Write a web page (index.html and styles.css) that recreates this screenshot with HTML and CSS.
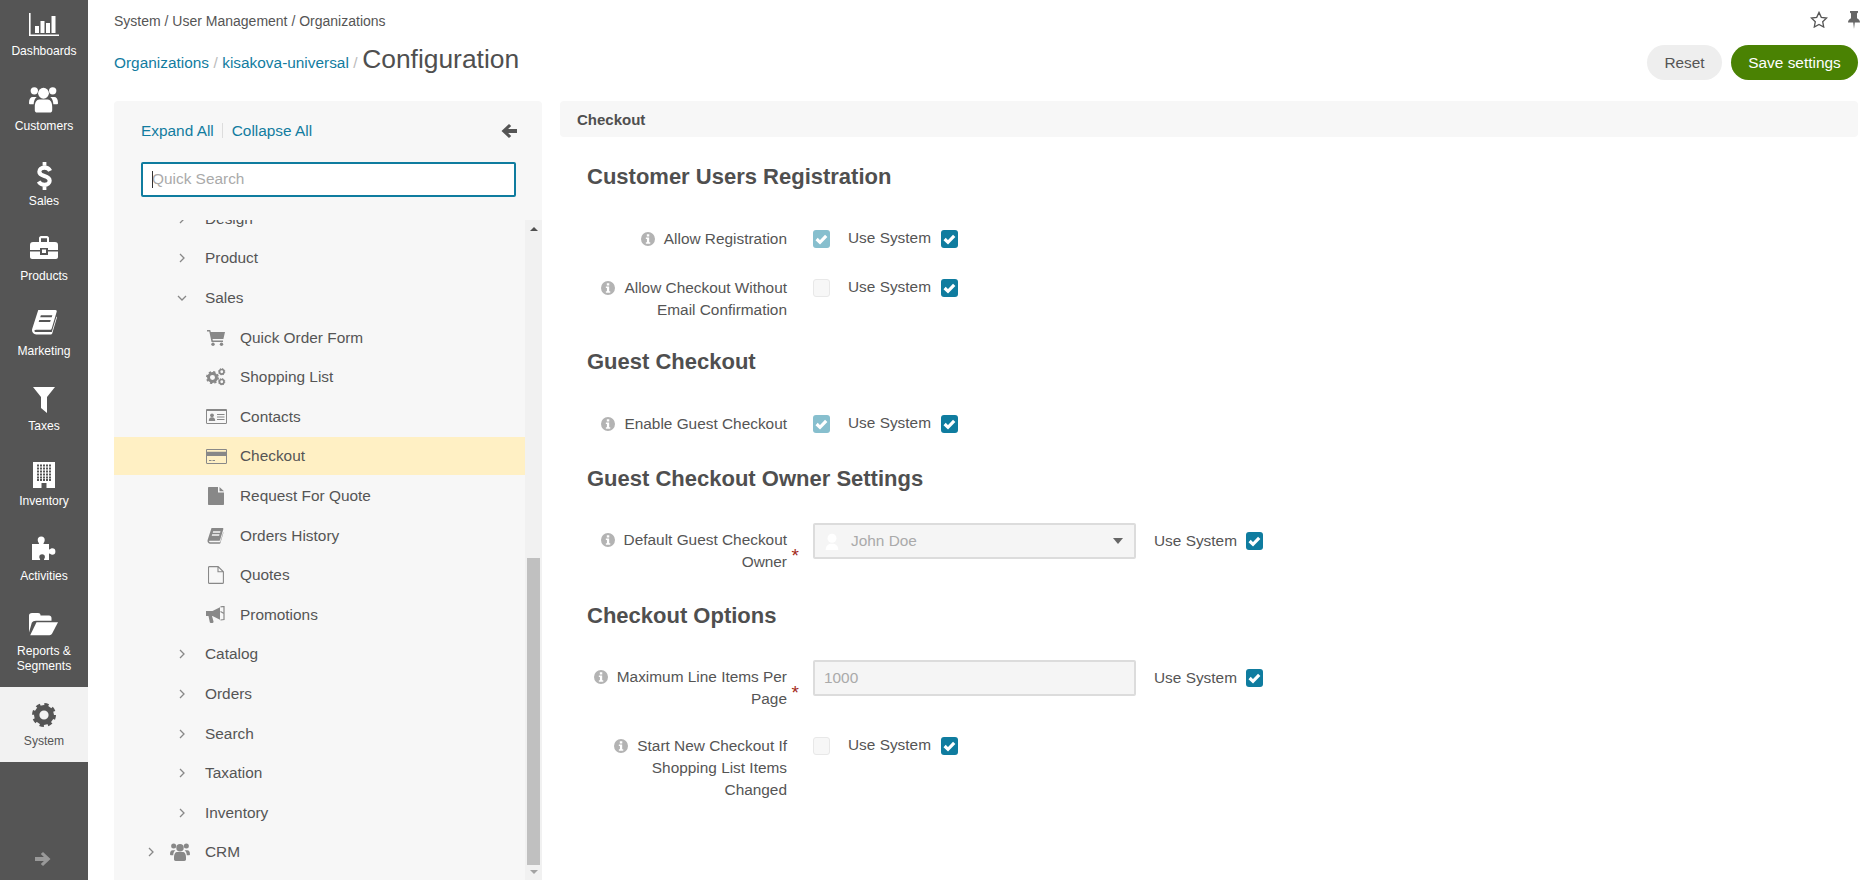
FILE: index.html
```html
<!DOCTYPE html>
<html lang="en">
<head>
<meta charset="utf-8">
<title>Configuration</title>
<link rel="stylesheet" href="styles.css">
</head>
<body>
<svg class="defs" width="0" height="0" aria-hidden="true">
  <symbol id="i-chart" viewBox="0 0 30 23"><path d="M0 0h1.600v21.400H30V23H0z"/><path d="M6 13h4v7H6zM11.500 8h4v12h-4zM17 10h4v10h-4zM22.500 3h4v17h-4z"/></symbol>
  <symbol id="i-users" viewBox="0 0 30 27"><circle cx="5.500" cy="4.500" r="3.800"/><circle cx="24.500" cy="4.500" r="3.800"/><circle cx="15" cy="7" r="5.600"/><path d="M0 17c0-4 1.500-6 4-6h4c-2 1.500-3 4-3.200 7.500H1.500C.5 18.500 0 18 0 17zM30 17c0-4-1.500-6-4-6h-4c2 1.500 3 4 3.200 7.500h3.300c1 0 1.500-.5 1.500-1.500zM8.500 27C7 27 6 26 6 24.500V21c0-4.500 2-7.500 4.500-7.500h9C22 13.500 24 16.500 24 21v3.500c0 1.500-1 2.500-2.500 2.500z"/></symbol>
  <symbol id="i-dollar" viewBox="0 0 16 30"><path d="M6 0h4v4H6zM6 26h4v4H6z"/><path d="M14 9.500C13 7.500 10.500 6 8 6 4.500 6 2.500 8 2.500 10.500c0 6 11 3 11 9.500 0 2.500-2.300 4.300-5.500 4.300-2.700 0-5-1.300-6.300-3.500" fill="none" stroke="currentColor" stroke-width="4.400"/></symbol>
  <symbol id="i-case" viewBox="0 0 28 23"><path fill-rule="evenodd" d="M0 9c0-2 1-3 3-3h6V2c0-1 1-2 2-2h6c1 0 2 1 2 2v4h6c2 0 3 1 3 3v5H18v-2h-8v2H0zM11 2.300V6h6V2.300z"/><path d="M0 15.500h10V19h8v-3.500h10V21c0 1-1 2-2 2H2c-1 0-2-1-2-2zM12 13.500h4V17h-4z"/></symbol>
  <symbol id="i-book" viewBox="0 0 24 24"><path fill-rule="evenodd" d="M6 0h16.500c1 0 1.500.7 1.200 1.700L19 17.500c-.3 1-.8 1.500-2 1.500H4c-1.500 0-2 .8-1.500 1.600.3.4.8.6 1.500.6h15l4.500-15 .5.700-4.600 15.600c-.2.600-.7 1-1.400 1H4c-2.500 0-4-2-4-4 0-.6.100-1.300.3-1.800zM8.500 5l-.6 2h11l.6-2zM7 9.500l-.6 2h11l.6-2z"/></symbol>
  <symbol id="i-filter" viewBox="0 0 22 26"><path d="M0 0h22L14 10v16l-6-5V10z"/></symbol>
  <symbol id="i-building" viewBox="0 0 22 26"><path d="M0 0h22v26H0z"/><path class="holes" d="M4 3.500h14M4 6.500h14M4 9.500h14M4 12.500h14M4 15.500h14M4 18h14"/><path class="door" d="M8.500 21h5v5h-5z"/></symbol>
  <symbol id="i-puzzle" viewBox="0 0 26 25"><path d="M1 8h6.500c.5 0 .7-.5.3-1C7 6 6.700 5 6.700 4a3.500 3.500 0 0 1 7 0c0 1-.3 2-1 3-.4.500-.2 1 .3 1H18v5c0 .5.500.7 1 .3 1-.7 1.500-1 2.200-1a3.200 3.200 0 0 1 0 6.400c-.7 0-1.300-.3-2.200-1-.5-.4-1-.2-1 .3V24h-4.500c-.5 0-.7-.5-.3-1 .6-1 .7-1.500.7-2a2.800 2.800 0 0 0-5.600 0c0 .5.100 1 .7 2 .3.500.100 1-.4 1H1z"/></symbol>
  <symbol id="i-folder" viewBox="0 0 29 27" preserveAspectRatio="none"><path d="M0 23V3c0-1.500 1-3 3-3h6c1.500 0 2.500 1 2.500 2.500V3H20c1.500 0 2.500 1 2.500 3v3H7c-2 0-3.500 1-4.200 2.500z"/><path d="M7.500 11H29l-6 13.500c-.5 1-1.500 1.500-2.500 1.500H1.200z"/></symbol>
  <symbol id="i-gear" viewBox="0 0 24 24"><circle cx="12" cy="12" r="7.300" fill="none" stroke="currentColor" stroke-width="5.400"/><circle cx="12" cy="12" r="10.400" fill="none" stroke="currentColor" stroke-width="3.200" stroke-dasharray="4.200 3.970"/></symbol>
  <symbol id="i-gears" viewBox="0 0 20 18"><use href="#i-gear" x="0" y="3" width="13" height="13"/><use href="#i-gear" x="12" y="0" width="7.500" height="7.500"/><use href="#i-gear" x="12" y="10" width="7.500" height="7.500"/></symbol>
  <symbol id="i-arrow" viewBox="0 0 16 14"><path d="M8 0l7.500 7L8 14l-2.200-2.100 3.100-3H0V5.100h8.900l-3.100-3z"/></symbol>
  <symbol id="i-cart" viewBox="0 0 18 16"><path d="M0 0h3.200l.6 2H18l-1.600 7H5.500l.4 1.500H16V12H4.500L2.300 1.500H0z"/><circle cx="6" cy="14.300" r="1.700"/><circle cx="14.500" cy="14.300" r="1.700"/></symbol>
  <symbol id="i-card" viewBox="0 0 21 15"><path fill-rule="evenodd" d="M1.200 0h18.600c.7 0 1.200.5 1.200 1.200v12.600c0 .7-.5 1.200-1.200 1.200H1.200C.5 15 0 14.500 0 13.800V1.200C0 .5.500 0 1.200 0zM1 1v1.700h19V1zM1 7v7h19V7z"/><path d="M3 11h2.500v1H3zM6.500 11H9v1H6.500z"/></symbol>
  <symbol id="i-idcard" viewBox="0 0 21 15"><path fill-rule="evenodd" d="M1.200 0h18.600c.7 0 1.200.5 1.200 1.200v12.600c0 .7-.5 1.200-1.200 1.200H1.200C.5 15 0 14.500 0 13.800V1.200C0 .5.500 0 1.200 0zM1 2v12h19V2z"/><circle cx="6" cy="6.300" r="1.900"/><path d="M2.800 12c0-2.500 1-3.700 3.200-3.700S9.200 9.500 9.200 12zM11 5h7.500v1.100H11zM11 7.500h7.500v1.100H11zM11 10h7.500v1.100H11z"/></symbol>
  <symbol id="i-file" viewBox="0 0 16 18"><path d="M1 0h9v5.500h6V17c0 .6-.4 1-1 1H1c-.6 0-1-.4-1-1V1c0-.6.400-1 1-1z"/><path d="M11.500 0L16 4.300h-4.500z"/></symbol>
  <symbol id="i-fileo" viewBox="0 0 16 18"><path fill="none" stroke="currentColor" stroke-width="1.100" d="M1.500.6h8.600l5.300 5.200V16.400c0 .6-.4 1-1 1H1.500c-.6 0-1-.4-1-1V1.600c0-.6.400-1 1-1zM10 .6v5.200h5.400"/></symbol>
  <symbol id="i-horn" viewBox="0 0 19 17"><path d="M0 5h6.500L14 1.200v12.600L6.500 10H6l1.500 5.500c.2.700-.3 1.500-1 1.500H4.800c-.5 0-.9-.3-1-.8L2.500 10H0z"/><path fill="none" stroke="currentColor" stroke-width="1.200" d="M14.500.8L18 .5v13l-3.500.5M14.500 5.500l3.500 2"/></symbol>
  <symbol id="i-star" viewBox="0 0 18 17"><path fill="none" stroke="currentColor" stroke-width="1.300" d="M9 1.400l2.300 4.900 5.300.7-3.900 3.700 1 5.300L9 13.400 4.300 16l1-5.300L1.400 7l5.300-.7z"/></symbol>
  <symbol id="i-pin" viewBox="0 0 12 18"><path d="M2 0h8v1.500L9 2.500v4.800c1.700.9 3 2.200 3 4.200H6.800L6 18l-.8-6.500H0c0-2 1.300-3.300 3-4.200V2.500L2 1.500z"/></symbol>
  <symbol id="i-info" viewBox="0 0 13 13"><path fill-rule="evenodd" d="M6.500 0a6.500 6.500 0 1 1 0 13 6.500 6.500 0 0 1 0-13zM5.400 2.100v2h2.300v-2zM4.500 5.200v1.200h1v3.200h-1v1.200h4.100V9.600h-1V5.200z"/></symbol>
  <symbol id="i-check" viewBox="0 0 17 17"><path fill="none" stroke="currentColor" stroke-width="3.200" d="M3.600 8.500l3.400 3.300 6.200-6.400"/></symbol>
</svg>

<nav class="nav">
  <ul class="nav-list">
    <li class="nav-item"><svg class="ni ni-chart"><use href="#i-chart"/></svg><span>Dashboards</span></li>
    <li class="nav-item"><svg class="ni ni-users"><use href="#i-users"/></svg><span>Customers</span></li>
    <li class="nav-item"><svg class="ni ni-dollar"><use href="#i-dollar"/></svg><span>Sales</span></li>
    <li class="nav-item"><svg class="ni ni-case"><use href="#i-case"/></svg><span>Products</span></li>
    <li class="nav-item"><svg class="ni ni-book"><use href="#i-book"/></svg><span>Marketing</span></li>
    <li class="nav-item"><svg class="ni ni-filter"><use href="#i-filter"/></svg><span>Taxes</span></li>
    <li class="nav-item"><svg class="ni ni-building"><use href="#i-building"/></svg><span>Inventory</span></li>
    <li class="nav-item"><svg class="ni ni-puzzle"><use href="#i-puzzle"/></svg><span>Activities</span></li>
    <li class="nav-item nav-tall"><svg class="ni ni-folder"><use href="#i-folder"/></svg><span>Reports &amp; Segments</span></li>
    <li class="nav-item nav-active"><svg class="ni ni-gear"><use href="#i-gear"/></svg><span>System</span></li>
  </ul>
  <svg class="nav-toggle"><use href="#i-arrow"/></svg>
</nav>

<div class="main">
  <header class="head">
    <div class="head-top">
      <div class="crumbs">System / User Management / Organizations</div>
      <div class="head-icons">
        <svg class="ic-star"><use href="#i-star"/></svg>
        <svg class="ic-pin"><use href="#i-pin"/></svg>
      </div>
    </div>
    <div class="head-title">
      <div class="title-line">
        <a class="link">Organizations</a><span class="sep">/</span><a class="link">kisakova-universal</a><span class="sep">/</span><h1 class="title">Configuration</h1>
      </div>
      <div class="actions">
        <button class="btn btn-reset">Reset</button>
        <button class="btn btn-save">Save settings</button>
      </div>
    </div>
  </header>

  <div class="panels">
    <aside class="side">
      <div class="side-tools">
        <a class="link">Expand All</a><span class="divider"></span><a class="link">Collapse All</a>
        <svg class="collapse-arrow"><use href="#i-arrow"/></svg>
      </div>
      <div class="search">
        <input class="search-input" type="text" placeholder="Quick Search">
        <span class="caret"></span>
      </div>
      <div class="tree-wrap">
        <div class="tree-clip">
          <ul class="tree">
            <li class="row lv1"><svg class="chev"><polyline points="2,1 6,5 2,9"/></svg><span>Design</span></li>
            <li class="row lv1"><svg class="chev"><polyline points="2,1 6,5 2,9"/></svg><span>Product</span></li>
            <li class="row lv1"><svg class="chev chev-down"><polyline points="2,1 6,5 2,9"/></svg><span>Sales</span></li>
            <li class="row lv2"><span class="ticon"><svg class="ti-cart"><use href="#i-cart"/></svg></span><span>Quick Order Form</span></li>
            <li class="row lv2"><span class="ticon"><svg class="ti-gears"><use href="#i-gears"/></svg></span><span>Shopping List</span></li>
            <li class="row lv2"><span class="ticon"><svg class="ti-card"><use href="#i-idcard"/></svg></span><span>Contacts</span></li>
            <li class="row lv2 row-active"><span class="ticon"><svg class="ti-card"><use href="#i-card"/></svg></span><span>Checkout</span></li>
            <li class="row lv2"><span class="ticon"><svg class="ti-file"><use href="#i-file"/></svg></span><span>Request For Quote</span></li>
            <li class="row lv2"><span class="ticon"><svg class="ti-book"><use href="#i-book"/></svg></span><span>Orders History</span></li>
            <li class="row lv2"><span class="ticon"><svg class="ti-file"><use href="#i-fileo"/></svg></span><span>Quotes</span></li>
            <li class="row lv2"><span class="ticon"><svg class="ti-horn"><use href="#i-horn"/></svg></span><span>Promotions</span></li>
            <li class="row lv1"><svg class="chev"><polyline points="2,1 6,5 2,9"/></svg><span>Catalog</span></li>
            <li class="row lv1"><svg class="chev"><polyline points="2,1 6,5 2,9"/></svg><span>Orders</span></li>
            <li class="row lv1"><svg class="chev"><polyline points="2,1 6,5 2,9"/></svg><span>Search</span></li>
            <li class="row lv1"><svg class="chev"><polyline points="2,1 6,5 2,9"/></svg><span>Taxation</span></li>
            <li class="row lv1"><svg class="chev"><polyline points="2,1 6,5 2,9"/></svg><span>Inventory</span></li>
            <li class="row lv0"><svg class="chev"><polyline points="2,1 6,5 2,9"/></svg><svg class="ti-users"><use href="#i-users"/></svg><span>CRM</span></li>
          </ul>
        </div>
        <div class="scrollbar">
          <span class="sb-up"></span>
          <span class="sb-thumb"></span>
          <span class="sb-down"></span>
        </div>
      </div>
    </aside>

    <section class="content">
      <div class="content-bar">Checkout</div>
      <div class="form">
        <h2 class="fs-title">Customer Users Registration</h2>
        <div class="f-row r-first">
          <label class="f-label"><svg class="info"><use href="#i-info"/></svg>Allow Registration</label>
          <span class="cb cb-dim"><svg><use href="#i-check"/></svg></span>
          <span class="use">Use System</span><span class="cb cb-on"><svg><use href="#i-check"/></svg></span>
        </div>
        <div class="f-row r-next">
          <label class="f-label"><svg class="info"><use href="#i-info"/></svg>Allow Checkout Without Email Confirmation</label>
          <span class="cb cb-off"></span>
          <span class="use">Use System</span><span class="cb cb-on"><svg><use href="#i-check"/></svg></span>
        </div>

        <h2 class="fs-title t-guest">Guest Checkout</h2>
        <div class="f-row r-first">
          <label class="f-label"><svg class="info"><use href="#i-info"/></svg>Enable Guest Checkout</label>
          <span class="cb cb-dim"><svg><use href="#i-check"/></svg></span>
          <span class="use">Use System</span><span class="cb cb-on"><svg><use href="#i-check"/></svg></span>
        </div>

        <h2 class="fs-title t-owner">Guest Checkout Owner Settings</h2>
        <div class="f-row r-field">
          <label class="f-label f-req"><svg class="info"><use href="#i-info"/></svg>Default Guest Checkout Owner<span class="star">*</span></label>
          <div class="control control-select">
            <svg class="avatar" viewBox="0 0 16 20"><circle cx="8" cy="7" r="5"/><path d="M1 20c0-5 3-7 7-7s7 2 7 7z"/></svg>
            <span class="control-val">John Doe</span>
            <span class="select-caret"></span>
          </div>
          <span class="use use-wide">Use System</span><span class="cb cb-on"><svg><use href="#i-check"/></svg></span>
        </div>

        <h2 class="fs-title t-options">Checkout Options</h2>
        <div class="f-row r-field">
          <label class="f-label f-req"><svg class="info"><use href="#i-info"/></svg>Maximum Line Items Per Page<span class="star">*</span></label>
          <div class="control"><span class="control-num">1000</span></div>
          <span class="use use-wide">Use System</span><span class="cb cb-on"><svg><use href="#i-check"/></svg></span>
        </div>
        <div class="f-row r-last">
          <label class="f-label"><svg class="info"><use href="#i-info"/></svg>Start New Checkout If Shopping List Items Changed</label>
          <span class="cb cb-off"></span>
          <span class="use">Use System</span><span class="cb cb-on"><svg><use href="#i-check"/></svg></span>
        </div>
      </div>
    </section>
  </div>
</div>
</body>
</html>
```

FILE: styles.css
```css
* { box-sizing: border-box; }
html, body { margin: 0; height: 100%; }
body {
  display: flex;
  height: 880px;
  overflow: hidden;
  background: #fff;
  color: #555;
  font: 15.4px/22px "Liberation Sans", Arial, sans-serif;
}
ul { list-style: none; margin: 0; padding: 0; }
svg { fill: currentColor; display: block; flex: none; }
.defs { position: absolute; }
.holes { fill: none; stroke: #555; stroke-width: 2; stroke-dasharray: 2 1; }
.door { fill: #555; }

/* left navigation */
.nav {
  width: 88px;
  flex: none;
  height: 880px;
  background: #555;
  color: #fff;
  position: relative;
  overflow: hidden;
}
.nav-list { margin-top: -3px; }
.nav-item {
  height: 75px;
  position: relative;
  display: flex;
  flex-direction: column;
  align-items: center;
  font-size: 12.1px;
  line-height: 15px;
  text-align: center;
}
.nav-item span { position: absolute; top: 47px; left: 2px; right: 2px; }
.nav-tall { height: 90px; }
.nav-tall span { left: 8px; right: 8px; }
.nav-active { background: #f2f2f2; color: #555; }
.ni { position: absolute; }
.ni-chart { width: 30px; height: 23px; top: 16px; left: 29px; }
.ni-users { width: 29px; height: 27px; top: 14px; left: 29px; }
.ni-dollar { width: 15px; height: 30px; top: 14px; left: 37px; }
.ni-case { width: 28px; height: 23px; top: 14px; left: 30px; }
.ni-book { width: 25px; height: 25px; top: 13px; left: 32px; }
.ni-filter { width: 22px; height: 26px; top: 15px; left: 33px; }
.ni-building { width: 22px; height: 26px; top: 15px; left: 33px; }
.ni-puzzle { width: 26px; height: 25px; top: 14px; left: 31px; }
.ni-folder { width: 29px; height: 23px; top: 16px; left: 29px; }
.ni-gear { width: 24px; height: 24px; top: 16px; left: 32px; }
.nav-toggle {
  position: absolute;
  left: 35px;
  top: 852px;
  width: 16px;
  height: 14px;
  color: #999;
}

/* main */
.main {
  flex: 1;
  min-width: 0;
  display: flex;
  flex-direction: column;
  padding: 0 14px 0 26px;
}
.head { height: 101px; flex: none; }
.head-top {
  height: 41px;
  display: flex;
  justify-content: space-between;
  padding-top: 10px;
}
.crumbs { font-size: 14px; line-height: 22px; }
.head-icons { display: flex; gap: 20px; margin-right: -2px; padding-top: 1px; }
.ic-star { width: 18px; height: 17px; color: #555; }
.ic-pin { width: 12px; height: 18px; color: #666; }
.head-title { display: flex; justify-content: space-between; align-items: center; height: 41px; }
.title-line { display: flex; align-items: baseline; font-size: 15.4px; padding-bottom: 6px; }
.link { color: #127c9f; }
.sep { color: #bbb; margin: 0 4.500px; }
.title { margin: 0; font-size: 26.400px; font-weight: 400; line-height: 32px; color: #4f4f4f; }
.actions { display: flex; gap: 9px; padding-top: 1px; }
.btn {
  height: 35px;
  border: 0;
  border-radius: 18px;
  font: 15.400px/35px "Liberation Sans", Arial, sans-serif;
  padding: 0;
}
.btn-reset { width: 75px; background: #eee; color: #555; }
.btn-save { width: 127px; background: #4a8203; color: #fff; }

.panels { flex: 1; display: flex; gap: 18px; min-height: 0; }

/* config tree */
.side {
  width: 428px;
  flex: none;
  background: #f7f7f7;
  border-radius: 4px 4px 0 0;
  display: flex;
  flex-direction: column;
}
.side-tools {
  display: flex;
  align-items: center;
  height: 61px;
  padding: 0 25px 2px 27px;
}
.divider { width: 1px; height: 15px; background: #ddd; margin: 0 9px 0 8px; }
.collapse-arrow {
  width: 16px;
  height: 14px;
  margin-left: auto;
  transform: scaleX(-1);
  color: #555;
}
.search { margin: 0 26px 0 27px; height: 35px; position: relative; flex: none; }
.search-input {
  width: 100%;
  height: 35px;
  border: 2px solid #0f7c9f;
  border-radius: 2px;
  background: #fff;
  padding: 0 9px 1px;
  font: 15.400px "Liberation Sans", Arial, sans-serif;
  outline: 0;
}
.search-input::placeholder { color: #aaa; }
.caret {
  position: absolute;
  left: 11px;
  top: 9px;
  width: 1px;
  height: 17px;
  background: #333;
}
.tree-wrap { flex: 1; display: flex; min-height: 0; margin-top: 23px; }
.tree-clip { flex: 1; overflow: hidden; min-width: 0; }
.tree { margin-top: -21px; }
.row {
  height: 39.6px;
  display: flex;
  align-items: center;
  color: #555;
}
.lv0 { padding-left: 33px; }
.lv1 { padding-left: 64px; }
.lv2 { padding-left: 92px; }
.row-active { background: linear-gradient(#fff0c4 38.400px, #f7f7f7 38.400px); }
.chev {
  width: 8px;
  height: 10px;
  margin-right: 19px;
  fill: none;
  stroke: #888;
  stroke-width: 1.300;
}
.lv0 .chev { margin-right: 15px; }
.chev-down { transform: rotate(90deg); }
.ticon { width: 34px; flex: none; display: flex; align-items: center; color: #888; }
.ti-cart { width: 18px; height: 16px; margin-left: 1px; }
.ti-gears { width: 20px; height: 18px; }
.ti-card { width: 21px; height: 15px; }
.ti-file { width: 16px; height: 18px; margin-left: 2px; }
.ti-book { width: 17px; height: 16px; margin-left: 1px; }
.ti-horn { width: 19px; height: 17px; }
.ti-users { width: 20px; height: 18px; margin-right: 15px; color: #888; }

.scrollbar {
  width: 17px;
  flex: none;
  background: #f1f1f1;
  display: flex;
  flex-direction: column;
  align-items: center;
  position: relative;
}
.sb-up, .sb-down {
  position: absolute;
  left: 5px;
  width: 0;
  height: 0;
  border-left: 4px solid transparent;
  border-right: 4px solid transparent;
}
.sb-up { top: 7px; border-bottom: 4px solid #505050; }
.sb-down { bottom: 6px; border-top: 4px solid #a3a3a3; }
.sb-thumb { width: 13px; height: 307px; margin-top: 338px; background: #c0c0c0; }

/* right content */
.content { flex: 1; min-width: 0; }
.content-bar {
  height: 36px;
  background: #f7f7f7;
  border-radius: 4px;
  padding-left: 17px;
  font-size: 15px;
  font-weight: 700;
  line-height: 37px;
  color: #4f4f4f;
}
.form { padding: 27px 0 0 27px; }
.fs-title {
  margin: 0;
  font-size: 22px;
  font-weight: 700;
  line-height: 26px;
  color: #4f4f4f;
}
.t-guest { margin-top: 28px; }
.t-owner { margin-top: 31px; }
.t-options { margin-top: 30px; }
.f-row { display: flex; align-items: flex-start; }
.r-first { margin-top: 38px; }
.r-next { margin-top: 27px; }
.r-field { margin-top: 31px; }
.r-last { margin-top: 25px; }
.f-label {
  width: 200px;
  flex: none;
  text-align: right;
  position: relative;
  margin-right: 26px;
  line-height: 22px;
}
.r-field .f-label { padding-top: 6px; }
.info {
  display: inline-block;
  vertical-align: -2px;
  width: 14px;
  height: 14px;
  margin-right: 9px;
  color: #b3b3b3;
}
.star {
  position: absolute;
  right: -12px;
  bottom: 11px;
  color: #a32a1a;
  font-size: 19px;
  line-height: 12px;
}
.cb {
  width: 17px;
  height: 18px;
  border-radius: 3px;
  flex: none;
  color: #fff;
  margin-top: 2px;
}
.cb svg { width: 17px; height: 18px; }
.cb-on { background: #0f7c9f; }
.cb-dim { background: #87bfce; }
.cb-off { background: #f7f7f7; border: 1px solid #e8e8e8; }
.use { margin: -1px 10px 0 18px; width: 83px; flex: none; white-space: nowrap; }
.r-field .use { margin-top: 0; margin-right: 9px; padding-top: 7px; }
.r-field .cb { margin-top: 9px; }
.control {
  width: 323px;
  height: 36px;
  flex: none;
  background: #f5f5f5;
  border: 2px solid #dcdcdc;
  border-radius: 2px;
  display: flex;
  align-items: center;
  color: #aaa;
  padding-left: 9px;
}
.control-select { position: relative; }
.avatar { width: 16px; height: 18px; color: #fff; margin-right: 11px; }
.select-caret {
  margin-left: auto;
  margin-right: 11px;
  width: 0;
  height: 0;
  border-left: 5px solid transparent;
  border-right: 5px solid transparent;
  border-top: 6px solid #666;
}
```
